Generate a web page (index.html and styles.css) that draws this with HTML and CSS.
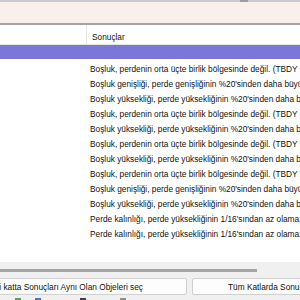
FILE: index.html
```html
<!DOCTYPE html>
<html lang="tr">
<head>
<meta charset="utf-8">
<title>Sonuçlar</title>
<link rel="stylesheet" href="styles.css">
</head>
<body>
  <div class="frame">
    <div class="topscroll"><div class="thumb"></div></div>
    <div class="panel"></div>
    <div class="grid">
      <div class="head">
        <div class="col-a"></div>
        <div class="col-b">Sonuçlar</div>
      </div>
      <div class="row selected"><div class="col-a"></div><div class="col-b"></div></div>
      <div class="row"><div class="col-a"></div><div class="col-b">Boşluk, perdenin orta üçte birlik bölgesinde değil. (TBDY 2018)</div></div>
      <div class="row"><div class="col-a"></div><div class="col-b">Boşluk genişliği, perde genişliğinin %20'sinden daha büyük</div></div>
      <div class="row"><div class="col-a"></div><div class="col-b">Boşluk yüksekliği, perde yüksekliğinin %20'sinden daha büyük</div></div>
      <div class="row"><div class="col-a"></div><div class="col-b">Boşluk, perdenin orta üçte birlik bölgesinde değil. (TBDY 2018)</div></div>
      <div class="row"><div class="col-a"></div><div class="col-b">Boşluk yüksekliği, perde yüksekliğinin %20'sinden daha büyük</div></div>
      <div class="row"><div class="col-a"></div><div class="col-b">Boşluk, perdenin orta üçte birlik bölgesinde değil. (TBDY 2018)</div></div>
      <div class="row"><div class="col-a"></div><div class="col-b">Boşluk yüksekliği, perde yüksekliğinin %20'sinden daha büyük</div></div>
      <div class="row"><div class="col-a"></div><div class="col-b">Boşluk, perdenin orta üçte birlik bölgesinde değil. (TBDY 2018)</div></div>
      <div class="row"><div class="col-a"></div><div class="col-b">Boşluk genişliği, perde genişliğinin %20'sinden daha büyük</div></div>
      <div class="row"><div class="col-a"></div><div class="col-b">Boşluk yüksekliği, perde yüksekliğinin %20'sinden daha büyük</div></div>
      <div class="row"><div class="col-a"></div><div class="col-b">Perde kalınlığı, perde yüksekliğinin 1/16'sından az olamaz</div></div>
      <div class="row"><div class="col-a"></div><div class="col-b">Perde kalınlığı, perde yüksekliğinin 1/16'sından az olamaz</div></div>
    </div>
    <div class="hscroll"><div class="bar"></div></div>
    <div class="buttons">
      <button class="btn left">Seçili katta Sonuçları Aynı Olan Objeleri seç</button>
      <button class="btn right">Tüm Katlarda Sonuçları Aynı Olan Objeleri seç</button>
    </div>
    <div class="toolbar">
      <span class="dot green"></span>
      <span class="dot blue"></span>
      <span class="dot dark"></span>
      <span class="dot gray"></span>
    </div>
  </div>
</body>
</html>
```

FILE: styles.css
```css
* {
  margin: 0;
  padding: 0;
  box-sizing: border-box;
}

body {
  margin: 0;
  background: #f0f0f0;
  font-family: "Liberation Sans", Arial, sans-serif;
  font-size: 8.3px;
  color: #111;
}

.frame {
  width: 300px;
  height: 300px;
  overflow: hidden;
  display: flex;
  flex-direction: column;
}

.topscroll {
  height: 2px;
  background: #c9c9d3;
  display: flex;
}

.topscroll .thumb {
  margin-left: 240px;
  width: 8px;
  background: #9c9cab;
}

.panel {
  height: 23px;
  background: #f9efeb;
  border-bottom: 2px solid #a3a3a6;
}

.grid {
  background: #fff;
  height: 237px;
  overflow: hidden;
}

.head,
.row {
  display: flex;
  white-space: nowrap;
}

.head {
  height: 20px;
  border-bottom: 1px solid #e5e5e5;
}

.head .col-a {
  border-right: 1px solid #e5e5e5;
}

.head .col-b {
  padding: 6px 0 0 5px;
  line-height: 12px;
}

.col-a {
  width: 87px;
  flex: none;
}

.col-b {
  padding: 4px 0 0 3px;
  line-height: 12px;
  flex: none;
}

.row {
  height: 15px;
}

.row.selected {
  height: 14px;
  background: #7b77d9;
}

.hscroll {
  height: 14px;
  background: #f0f0f0;
  padding: 7px 43px 0 0;
}

.hscroll .bar {
  height: 3px;
  background: #a6a6a6;
}

.buttons {
  display: flex;
  gap: 5px;
  padding-top: 2px;
  height: 20px;
}

.btn {
  height: 17px;
  background: #fdfdfd;
  border: 1px solid #d0d0d0;
  border-radius: 2px;
  font-family: inherit;
  font-size: 8.3px;
  color: #111;
  white-space: nowrap;
  overflow: hidden;
  flex: none;
}

.btn.left {
  width: 230px;
  margin-left: -43px;
  text-align: right;
  padding-right: 43px;
}

.btn.right {
  width: 200px;
  padding-left: 35px;
  text-align: left;
}

.toolbar {
  height: 4px;
  display: flex;
  gap: 14px;
  padding: 2px 0 0 15px;
}

.dot {
  width: 6px;
  height: 2px;
}

.dot.green { background: #5aa05a; }
.dot.blue { background: #4a78c0; }
.dot.dark { background: #404040; margin-left: 25px; }
.dot.gray { background: #909090; margin-left: 20px; }
```
